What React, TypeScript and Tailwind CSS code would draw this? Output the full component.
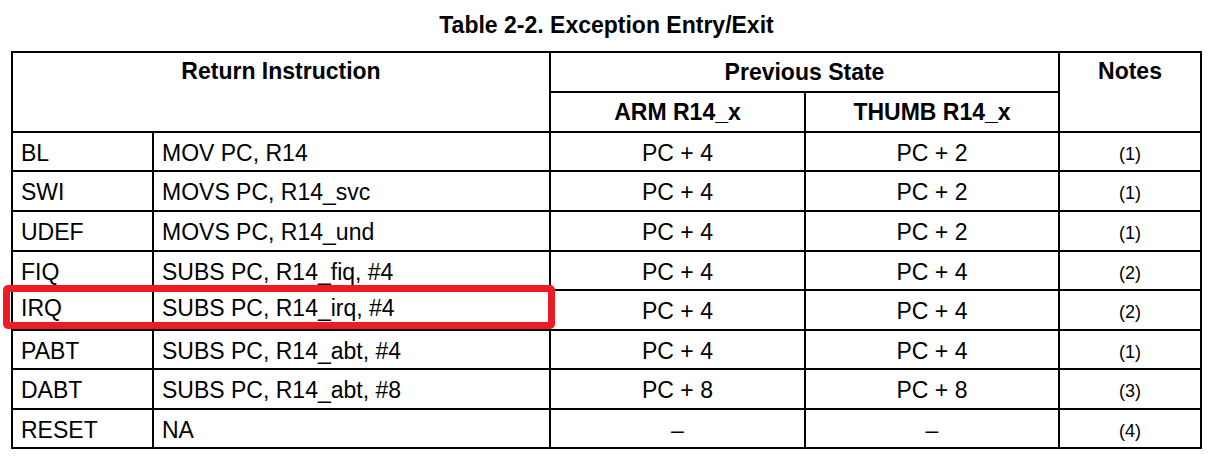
import React from "react";

const rows: [string, string, string, string, string][] = [
  ["BL", "MOV PC, R14", "PC + 4", "PC + 2", "(1)"],
  ["SWI", "MOVS PC, R14_svc", "PC + 4", "PC + 2", "(1)"],
  ["UDEF", "MOVS PC, R14_und", "PC + 4", "PC + 2", "(1)"],
  ["FIQ", "SUBS PC, R14_fiq, #4", "PC + 4", "PC + 4", "(2)"],
  ["IRQ", "SUBS PC, R14_irq, #4", "PC + 4", "PC + 4", "(2)"],
  ["PABT", "SUBS PC, R14_abt, #4", "PC + 4", "PC + 4", "(1)"],
  ["DABT", "SUBS PC, R14_abt, #8", "PC + 8", "PC + 8", "(3)"],
  ["RESET", "NA", "–", "–", "(4)"],
];

export default function App() {
  return (
    <div className="relative w-[1217px] h-[456px] bg-white overflow-hidden text-black font-['Liberation_Sans',Arial,sans-serif]">
      <div className="ml-[11px] w-[1191px] h-[51px] pt-[14px] text-center text-[23px] leading-[23px] font-bold">
        Table 2-2. Exception Entry/Exit
      </div>
      <div className="ml-[11px] w-[1191px] grid grid-cols-[139px_395px_253px_252px_140px] grid-rows-[38px_38px_37px_38px_38px_37px_38px_37px_38px_37px] gap-[2px] p-[2px] bg-black">
        <div className="col-span-2 row-span-2 bg-white pt-[7px] text-center text-[23px] leading-[23px] font-bold">
          Return Instruction
        </div>
        <div className="col-span-2 bg-white flex items-center justify-center text-[23px] leading-[23px] font-bold">
          Previous State
        </div>
        <div className="row-span-2 bg-white pt-[7px] text-center text-[23px] leading-[23px] font-bold">
          Notes
        </div>
        <div className="bg-white flex items-center justify-center text-[23px] leading-[23px] font-bold">
          ARM R14_x
        </div>
        <div className="bg-white flex items-center justify-center text-[23px] leading-[23px] font-bold">
          THUMB R14_x
        </div>
        {rows.map((r, i) => {
          const pad = i === 4 ? "pb-[3px]" : "pt-[3px]";
          return (
            <React.Fragment key={i}>
              <div className={`bg-white flex items-center pl-[8px] text-[23px] leading-[23px] ${pad}`}>{r[0]}</div>
              <div className={`bg-white flex items-center pl-[8px] text-[23px] leading-[23px] ${pad}`}>{r[1]}</div>
              <div className="bg-white flex items-center justify-center pt-[3px] text-[23px] leading-[23px]">{r[2]}</div>
              <div className="bg-white flex items-center justify-center pt-[3px] text-[23px] leading-[23px]">{r[3]}</div>
              <div className="bg-white flex items-center justify-center pt-[4px] text-[18px] leading-[18px]">{r[4]}</div>
            </React.Fragment>
          );
        })}
      </div>
      <div className="absolute left-[3px] top-[285px] w-[552px] h-[44px] border-[7px] border-[#ed1c24] rounded-[5px]" />
    </div>
  );
}
